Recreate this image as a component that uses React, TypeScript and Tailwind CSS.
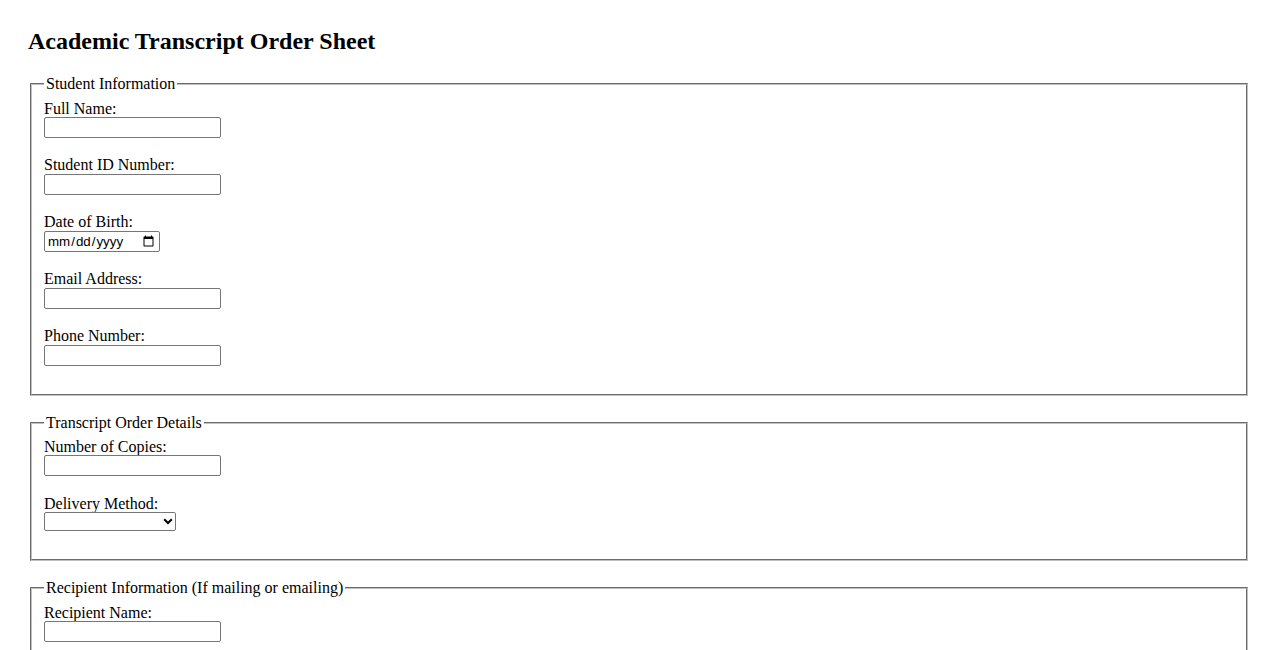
import React from "react";

const inputCls =
  "box-border block w-[177px] h-[21px] border border-[#767676] rounded-[2px] px-[2px] bg-white text-[13.33px] font-['Liberation_Sans',Arial,sans-serif] text-black outline-none";

function Field({ label, type = "text", id }: { label: string; type?: string; id: string }) {
  return (
    <div className="flex flex-col items-start mb-[18.6px]">
      <label htmlFor={id} className="block leading-[18.4px] h-[17.4px]">
        {label}
      </label>
      <input id={id} type={type} className={inputCls} />
    </div>
  );
}

function Section({
  title,
  children,
  className,
}: {
  title: string;
  children: React.ReactNode;
  className: string;
}) {
  return (
    <fieldset
      className={
        "mx-[2px] border-2 [border-style:groove] border-[rgb(192,192,192)] px-[12px] min-w-0 " + className
      }
    >
      <legend className="px-[2px] leading-[18.4px]">{title}</legend>
      {children}
    </fieldset>
  );
}

export default function App() {
  return (
    <div className="min-h-screen bg-white text-black font-['Liberation_Serif','Times_New_Roman',serif] text-[16px] leading-[1.15] pt-[28px] px-[28px] pb-[28px]">
      <h2 className="text-[24px] font-bold leading-[27.6px] mb-[18.92px]">Academic Transcript Order Sheet</h2>
      <form>
        <Section title="Student Information" className="pt-[6.6px] pb-[9.2px] mb-[18px]">
          <Field label="Full Name:" id="name" />
          <Field label="Student ID Number:" id="sid" />
          <div className="flex flex-col items-start mb-[18.6px]">
            <label htmlFor="dob" className="block leading-[18.4px] h-[17.4px]">
              Date of Birth:
            </label>
            <input
              id="dob"
              type="date"
              className="box-border block w-[116px] h-[21px] border border-[#767676] rounded-[2px] px-[2px] bg-white text-[13.33px] font-['Liberation_Sans',Arial,sans-serif] text-black outline-none"
            />
          </div>
          <Field label="Email Address:" id="email" type="email" />
          <Field label="Phone Number:" id="phone" type="tel" />
        </Section>

        <Section title="Transcript Order Details" className="pt-[5.6px] pb-[10px] mb-[18px]">
          <Field label="Number of Copies:" id="copies" type="number" />
          <div className="flex flex-col items-start mb-[17.6px]">
            <label htmlFor="delivery" className="block leading-[18.4px] h-[17.4px]">
              Delivery Method:
            </label>
            <div className="relative w-[132px] h-[19px]">
              <select
                id="delivery"
                defaultValue=""
                className="box-border block w-[132px] h-[19px] appearance-none border border-[#767676] rounded-[2px] bg-white text-[13.33px] font-['Liberation_Sans',Arial,sans-serif] text-black pl-[2px] outline-none"
              >
                <option value=""></option>
                <option value="pickup">Pick Up</option>
                <option value="mail">Mail</option>
                <option value="email">Email</option>
              </select>
              <svg
                className="pointer-events-none absolute right-[3px] top-[6px]"
                width="10"
                height="7"
                viewBox="0 0 10 7"
              >
                <path d="M1.2 1.2 L5 5 L8.8 1.2" fill="none" stroke="#000" strokeWidth="2" />
              </svg>
            </div>
          </div>
        </Section>

        <Section title="Recipient Information (If mailing or emailing)" className="pt-[6.6px] pb-[10px] mb-[18px]">
          <Field label="Recipient Name:" id="rname" />
          <Field label="Recipient Address:" id="raddr" />
          <Field label="Recipient Email:" id="remail" type="email" />
        </Section>

        <Section title="Payment Information" className="pt-[6.6px] pb-[10px] mb-[18px]">
          <Field label="Cardholder Name:" id="cname" />
          <Field label="Card Number:" id="cnum" />
        </Section>
      </form>
    </div>
  );
}
